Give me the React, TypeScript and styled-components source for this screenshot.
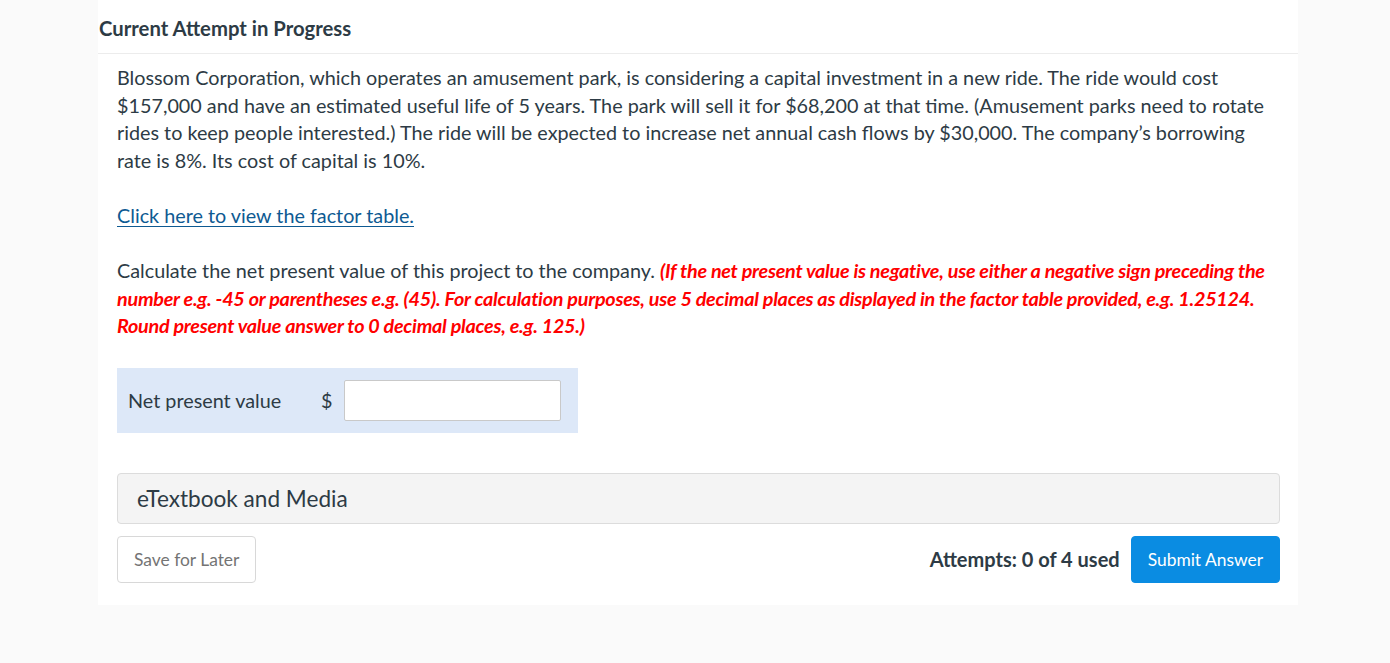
import React from "react";
import styled, { createGlobalStyle } from "styled-components";

const Global = createGlobalStyle`
  html, body { margin: 0; padding: 0; background: #fafafa; }
  body { font-family: Lato, "Open Sans", Arial, sans-serif; color: #2d3b45; }
`;

const Page = styled.div`
  display: flex;
  justify-content: flex-start;
  padding-left: 98px;
  min-height: 663px;
`;

const Card = styled.div`
  width: 1200px;
  background: #fff;
  align-self: flex-start;
`;

const Header = styled.div`
  padding: 17px 0 14px 1px;
  line-height: 22px;
  font-size: 20.3px;
  font-weight: 700;
  color: #2d3b45;
  border-bottom: 1px solid #ececec;
`;

const Body = styled.div`
  padding: 10px 18px 22px 19px;
`;

const Para = styled.p`
  margin: 0 0 27.6px;
  font-size: 19.8px;
  line-height: 27.6px;
  color: #2d3b45;
`;

const Link = styled.a`
  color: #0e5a92;
  text-decoration: underline;
  text-underline-offset: 3px;
  cursor: pointer;
`;

const Red = styled.span`
  color: #ff0000;
  font-weight: 700;
  font-style: italic;
  letter-spacing: -0.26px;
`;

const AnswerBox = styled.div`
  display: inline-flex;
  align-items: center;
  background: #dde8f8;
  padding: 12px 17px 12px 11px;
  margin-bottom: 40px;
`;

const Label = styled.span`
  width: 193px;
  font-size: 19.8px;
  color: #2d3b45;
`;

const Dollar = styled.span`
  font-size: 19.8px;
  margin-right: 12px;
`;

const Input = styled.input`
  width: 217px;
  height: 41px;
  box-sizing: border-box;
  border: 1px solid #c9c9c9;
  border-radius: 2px;
  background: #fff;
  font-family: inherit;
  font-size: 18px;
  padding: 0 8px;
`;

const Media = styled.div`
  height: 51px;
  box-sizing: border-box;
  display: flex;
  align-items: center;
  padding-left: 19px;
  background: #f4f4f4;
  border: 1px solid #dcdcdc;
  border-radius: 4px;
  font-size: 22.6px;
  color: #2d3b45;
`;

const Actions = styled.div`
  display: flex;
  align-items: center;
  margin-top: 12px;
`;

const Button = styled.button<{ $primary?: boolean }>`
  height: 47px;
  box-sizing: border-box;
  padding: 0 16px;
  font-family: inherit;
  font-size: 17.4px;
  border-radius: 4px;
  cursor: pointer;
  border: 1px solid ${(p) => (p.$primary ? "#0a8ce2" : "#d8d8d8")};
  background: ${(p) => (p.$primary ? "#0a8ce2" : "#fff")};
  color: ${(p) => (p.$primary ? "#fff" : "#747474")};
`;

const Attempts = styled.span`
  margin-left: auto;
  margin-right: 11px;
  font-size: 20px;
  font-weight: 700;
  color: #2d3b45;
`;

export default function App() {
  return (
    <>
      <Global />
      <Page>
        <Card>
          <Header>Current Attempt in Progress</Header>
          <Body>
            <Para>
              Blossom Corporation, which operates an amusement park, is considering a capital investment in a new ride. The ride would cost
              $157,000 and have an estimated useful life of 5 years. The park will sell it for $68,200 at that time. (Amusement parks need to rotate
              rides to keep people interested.) The ride will be expected to increase net annual cash flows by $30,000. The company’s borrowing
              rate is 8%. Its cost of capital is 10%.
            </Para>
            <Para>
              <Link>Click here to view the factor table.</Link>
            </Para>
            <Para>
              Calculate the net present value of this project to the company.{" "}
              <Red>
                (If the net present value is negative, use either a negative sign preceding the number e.g. -45 or parentheses e.g. (45). For
                calculation purposes, use 5 decimal places as displayed in the factor table provided, e.g. 1.25124. Round present value answer to 0
                decimal places, e.g. 125.)
              </Red>
            </Para>
            <AnswerBox>
              <Label>Net present value</Label>
              <Dollar>$</Dollar>
              <Input type="text" />
            </AnswerBox>
            <Media>eTextbook and Media</Media>
            <Actions>
              <Button>Save for Later</Button>
              <Attempts>Attempts: 0 of 4 used</Attempts>
              <Button $primary>Submit Answer</Button>
            </Actions>
          </Body>
        </Card>
      </Page>
    </>
  );
}
